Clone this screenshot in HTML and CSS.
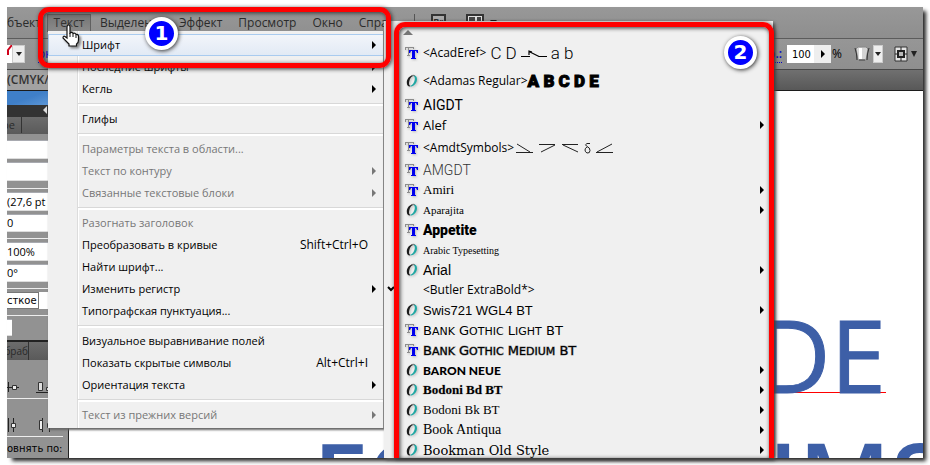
FILE: index.html
```html
<!DOCTYPE html>
<html lang="ru">
<head>
<meta charset="utf-8">
<title>Меню «Текст»</title>
<link rel="stylesheet" href="styles.css">
</head>
<body>
<svg class="defs" width="0" height="0" aria-hidden="true">
  <symbol id="tt" viewBox="0 0 14 14">
    <path d="M0 1.500h9M.5 1v3M8.500 1v2M3.500 1v8M2 9.500h3" fill="none" stroke="#8c8c8c"/>
    <path d="M4 4h9v3h-1l-1-2h-1v7h1v1H6v-1h1V5H6L5 7H4z" fill="#00e"/>
  </symbol>
  <symbol id="ot" viewBox="0 0 14 14">
    <path d="M8.500 1.200C4.500 1.200 1.800 5 1.800 8.500c0 2.600 1.200 4 3 4l.4-.8c-1.200-.3-1.500-2-1-4.200C4.800 4.600 6.300 2.200 8.500 2z" fill="#1c1c1c"/>
    <path d="M8.300 1.200c2.400 0 3.700 1.400 3.700 4 0 3.700-3 7.300-6.800 7.300l.2-.8C7.700 11.200 9.300 8.500 9.700 6c.4-2.200 0-3.700-1.400-4z" fill="#1fa8a4"/>
    <path d="M6 1.700Q8.500.8 10 1.800" fill="none" stroke="#777" stroke-width=".9"/>
  </symbol>
</svg>
<div class="app">
  <nav class="menubar">
    <button class="top first">бъект</button>
    <button class="top open">Текст</button>
    <button class="top sel">Выделение</button>
    <button class="top">Эффект</button>
    <button class="top">Просмотр</button>
    <button class="top">Окно</button>
    <button class="top help">Справка</button>
    <span class="bar-rule"></span>
    <button class="bridge">Br</button>
    <svg class="arrange" width="32" height="17" viewBox="0 0 32 17" aria-hidden="true">
      <rect x="1" y="1" width="16" height="15" fill="#ddd" stroke="#333" stroke-width="2"/>
      <path d="M3 3h6v10H3zM11 3h4v10h-4z" fill="#444"/><path d="M24 6h7l-3.500 4z" fill="#111"/>
    </svg>
  </nav>

  <div class="controlbar">
    <svg width="5" height="18" viewBox="0 0 5 18" aria-hidden="true"><path d="M0 0h5v18H0z" fill="#fff"/><path d="M5 0L1 5v5" stroke="#d0021b" stroke-width="2" fill="none"/></svg>
    <button class="drop" aria-label="Цвет заливки"><i class="down"></i></button>
    <a class="blue stroke-link" href="#">ок</a>
    <a class="blue push" href="#">р.:</a>
    <input class="opacity" aria-label="Непрозрачность" value="100"><button class="step" aria-label="Изменить непрозрачность"><i class="right"></i></button><span class="pct">%</span>
    <svg class="warp" width="16" height="16" viewBox="0 0 16 16" aria-hidden="true">
      <path d="M4 1h8l2 2-2 11H4L2 3z" fill="#d4d4d4" stroke="#888"/><path d="M5 2h3v11H5z" fill="#fff"/><path d="M1 2q2 6 2 12M15 2q-2 6-2 12" stroke="#333" fill="none"/><path d="M5 14h6" stroke="#444"/>
    </svg>
    <button class="drop small" aria-label="Огибающая"><i class="down"></i></button>
    <svg class="iso" width="14" height="16" viewBox="0 0 14 16" aria-hidden="true">
      <path d="M1 1h12v14H1z" fill="#e4e4e4" stroke="#333"/><path d="M4 5h6v6H4z" fill="#bbb" stroke="#222" stroke-width="2"/><path d="M7 1v3M7 12v3M1 8h3M10 8h3" stroke="#222"/>
    </svg>
    <i class="down wide"></i>
  </div>

  <div class="doctabs"><span class="doctab">(CMYK/П</span></div>

  <div class="work">
    <aside class="panel">
      <div class="photo"></div>
      <div class="collapse"><i class="left"></i></div>
      <div class="tabs t1"><span>ре</span></div>
      <div class="group g1">
        <input aria-label="Гарнитура">
        <input aria-label="Начертание">
      </div>
      <div class="group">
        <input aria-label="Интерлиньяж" value="(27,6 pt">
        <input aria-label="Трекинг" value="0">
      </div>
      <div class="group">
        <input aria-label="Масштаб" value="100%">
        <input aria-label="Поворот" value="0°">
      </div>
      <div class="group g2"><button class="aa">сткое</button></div>
      <div class="group g3"><input class="tiny" aria-label="Сглаживание"></div>
      <div class="tabs t2"><span>браб</span></div>
      <div class="align a1">
        <svg width="54" height="14" viewBox="0 0 54 14" aria-hidden="true"><path d="M0 7.500h12M1.500 2v10M29 12.500h16" stroke="#222"/><path d="M5.500 5.500h4v4h-4z" fill="#eee" stroke="#333"/><path d="M31.500 2.500h4v8h-4zM39.500 7.500h4v3h-4z" fill="#ddd" stroke="#333"/></svg>
      </div>
      <div class="align a2">
        <svg width="54" height="14" viewBox="0 0 54 14" aria-hidden="true"><path d="M1.500 0v14M6.500 0v14M35.500 0v14M42.500 0v14" stroke="#222"/><path d="M4.500 5.500h4v4h-4zM32.500 2.500h3v9h-3zM40.500 5.500h4v4h-4z" fill="#eee" stroke="#333"/></svg>
      </div>
      <div class="align-to">овнять по:</div>
    </aside>
    <main class="canvas">
      <p class="art"><span class="linked">DE</span></p>
      <p class="art second"><span>FO</span><span>IMS</span></p>
    </main>
  </div>

  <ul class="menu">
    <li><button class="hot">Шрифт<i class="right"></i></button></li>
    <li><button>Последние шрифты<i class="right"></i></button></li>
    <li><button>Кегль<i class="right"></i></button></li>
    <li class="sep"></li>
    <li><button>Глифы</button></li>
    <li class="sep"></li>
    <li><button disabled>Параметры текста в области...</button></li>
    <li><button disabled>Текст по контуру<i class="right"></i></button></li>
    <li><button disabled>Связанные текстовые блоки<i class="right"></i></button></li>
    <li class="sep"></li>
    <li><button disabled>Разогнать заголовок</button></li>
    <li><button>Преобразовать в кривые<kbd>Shift+Ctrl+O</kbd></button></li>
    <li><button>Найти шрифт...</button></li>
    <li><button>Изменить регистр<i class="right"></i></button></li>
    <li><button>Типографская пунктуация...</button></li>
    <li class="sep"></li>
    <li><button>Визуальное выравнивание полей</button></li>
    <li><button>Показать скрытые символы<kbd>Alt+Ctrl+I</kbd></button></li>
    <li><button>Ориентация текста<i class="right"></i></button></li>
    <li class="sep"></li>
    <li><button disabled>Текст из прежних версий<i class="right"></i></button></li>
  </ul>

  <ul class="fonts">
    <li class="scroll"><i class="up"></i></li>
    <li class="tall"><button><svg class="ic"><use href="#tt"/></svg>&lt;AcadEref&gt;<span class="sample thin">C D</span><svg width="26" height="10" viewBox="0 0 26 10" aria-hidden="true"><path d="M0 8.500h9M17 8.500h9M8 3.500l10 5M8 7V3l3 1" stroke="#000" fill="none" stroke-width="1.200"/></svg><span class="sample thin">a b</span></button></li>
    <li class="tallest"><button><svg class="ic"><use href="#ot"/></svg>&lt;Adamas Regular&gt;<span class="sample adamas">A B C D E</span></button></li>
    <li><button class="f-aigdt"><svg class="ic"><use href="#tt"/></svg>AIGDT</button></li>
    <li><button class="f-alef"><svg class="ic"><use href="#tt"/></svg>Alef<i class="right"></i></button></li>
    <li class="mid"><button><svg class="ic"><use href="#tt"/></svg>&lt;AmdtSymbols&gt;<svg class="marks" width="98" height="12" viewBox="0 0 98 12" aria-hidden="true"><path d="M1 2l13 8M0 10.500h17M23 2.500h16M39 3L25 10M46 2.500h16M47 3l15 7M80 10.500h17M81 10l15-8" stroke="#222" fill="none"/><path d="M74 1.500h-3q-3 1 0 3q3 1 3 4t-3 2.500q-2-1-2-3t2-3" stroke="#222" fill="none"/></svg></button></li>
    <li><button class="f-amgdt"><svg class="ic"><use href="#tt"/></svg>AMGDT</button></li>
    <li><button class="f-amiri"><svg class="ic"><use href="#tt"/></svg>Amiri<i class="right"></i></button></li>
    <li><button class="f-apar"><svg class="ic"><use href="#ot"/></svg>Aparajita<i class="right"></i></button></li>
    <li><button class="f-app"><svg class="ic"><use href="#tt"/></svg>Appetite</button></li>
    <li><button class="f-arab"><svg class="ic"><use href="#ot"/></svg>Arabic Typesetting</button></li>
    <li><button class="f-arial"><svg class="ic"><use href="#ot"/></svg>Arial<i class="right"></i></button></li>
    <li><button class="checked"><svg class="tick" width="8" height="8" viewBox="0 0 8 8" aria-hidden="true"><path d="M1 2l3 3 3-3" stroke="#000" stroke-width="2" fill="none"/></svg>&lt;Butler ExtraBold*&gt;</button></li>
    <li><button class="f-swis"><svg class="ic"><use href="#ot"/></svg>Swis721 WGL4 BT<i class="right"></i></button></li>
    <li><button class="f-bank"><svg class="ic"><use href="#tt"/></svg><span>B<small>ANK</small> G<small>OTHIC</small> L<small>IGHT</small> BT</span></button></li>
    <li><button class="f-bank medium"><svg class="ic"><use href="#tt"/></svg><span>B<small>ANK</small> G<small>OTHIC</small> M<small>EDIUM</small> BT</span></button></li>
    <li><button class="f-baron"><svg class="ic"><use href="#ot"/></svg>BARON NEUE<i class="right"></i></button></li>
    <li><button class="f-bodbd"><svg class="ic"><use href="#ot"/></svg>Bodoni Bd BT<i class="right"></i></button></li>
    <li><button class="f-bodbk"><svg class="ic"><use href="#ot"/></svg>Bodoni Bk BT<i class="right"></i></button></li>
    <li><button class="f-antiqua"><svg class="ic"><use href="#ot"/></svg>Book Antiqua<i class="right"></i></button></li>
    <li><button class="f-bookman"><svg class="ic"><use href="#ot"/></svg>Bookman Old Style<i class="right"></i></button></li>
  </ul>

  <div class="callout c1"></div>
  <div class="callout c2"></div>
  <span class="badge b1">1</span>
  <span class="badge b2">2</span>
  <svg class="cursor" width="18" height="24" viewBox="0 0 18 24" aria-hidden="true">
    <path d="M5 14V3q0-2 1.500-2T8 3v6q2-1.500 3 .5 2-1 3 1 2-.5 2.500 1.500V16q0 3-2 4v2H7v-2q-3-3-6-6 0-2.500 2-1.500z" fill="#fff" stroke="#111" stroke-width="1.200"/>
    <path d="M8 9v4M11 10v3M14 11v3" stroke="#111" fill="none"/>
  </svg>
</div>
</body>
</html>
```

FILE: styles.css
```css
* { box-sizing: border-box; }
html { background: #fff; }
body {
  margin: 0;
  padding: 7px;
  height: 100vh;
  overflow: hidden;
  font: 12px/16px "Open Sans", "Noto Sans", sans-serif;
  color: #000;
}
.defs { position: absolute; }
button, input { font: inherit; color: inherit; border: 0; border-radius: 0; padding: 0; margin: 0; background: none; }
ul { list-style: none; margin: 0; padding: 0; }
svg, i { flex: none; }

.app {
  position: relative;
  height: 100%;
  display: flex;
  flex-direction: column;
  background: #fff;
}
/* soft drop shadow on the right and bottom of the window */
.app::before {
  content: "";
  position: absolute;
  inset: 3px 0 0 4px;
  z-index: -1;
  box-shadow: 2px 2px 4px 1px #222;
}

/* arrows */
i { display: inline-block; width: 0; height: 0; border: 0 solid transparent; }
i.right { border-width: 4px 0 4px 4px; border-left-color: currentColor; }
i.left { border-width: 4px 4px 4px 0; border-right-color: #ddd; }
i.down { border-width: 4px 3px 0; border-top-color: #222; }
i.wide { border-width: 6px 3px 0; }
i.up { border-width: 0 5px 5px; border-bottom-color: #777; }

.menubar {
  flex: none;
  height: 32px;
  display: flex;
  align-items: flex-start;
  padding-top: 7px;
  background: linear-gradient(#989898, #8e8e8e);
  border-bottom: 1px solid #5c5c5c;
  color: #2b2b2b;
}
.top { height: 18px; padding: 0 8px; white-space: nowrap; }
.top.first { width: 40px; padding: 0; text-align: left; }
.top.open { width: 44px; padding: 0; background: linear-gradient(#757575, #8a8a8a); border: 1px solid #606060; color: #333; }
.top.sel { width: 80px; padding-left: 9px; text-align: left; overflow: hidden; }
.top.help { width: 35px; padding-right: 0; overflow: hidden; text-align: left; }
.bar-rule { width: 1px; height: 18px; background: #555; margin-left: 28px; }
.bridge { width: 15px; height: 16px; margin: 0 20px 0 16px; background: #aaa; border: 2px solid #333; font-size: 9px; line-height: 12px; font-weight: bold; }

.controlbar {
  flex: none;
  height: 31px;
  display: flex;
  align-items: center;
  padding-right: 6px;
  background: linear-gradient(#969696, #8f8f8f);
  border-bottom: 1px solid #484848;
}
.drop { width: 13px; height: 18px; display: flex; align-items: center; justify-content: center; background: #eee; border: 1px solid #ccc; }
.drop.small { width: 10px; margin-right: 11px; }
.blue { color: #00c; text-decoration: none; border-bottom: 1px dotted #00c; }
.stroke-link { margin-left: 13px; }
.push { margin-left: auto; margin-right: 5px; font-weight: 600; }
.opacity { width: 27px; height: 18px; background: #fff; padding-left: 5px; font: 11px "DejaVu Sans Condensed", "DejaVu Sans", sans-serif; }
.step { width: 17px; height: 18px; background: #eee; display: flex; align-items: center; justify-content: center; }
.pct { width: 23px; padding-left: 1px; }
.warp { margin-right: 3px; }
.iso { margin-right: 3px; }

.doctabs { flex: none; height: 21px; background: linear-gradient(#707070, #585858); border-bottom: 1px solid #1c1c1c; }
.doctab { display: block; width: 240px; height: 20px; line-height: 20px; overflow: hidden; background: #a2a2a2; color: #333; font-weight: 600; }

.work { flex: 1; min-height: 0; display: flex; overflow: hidden; }
.panel { flex: none; width: 62px; overflow: hidden; background: #929292; border-right: 1px solid #222; font-size: 11px; }
.photo { height: 14px; background: linear-gradient(160deg, #3f7fc8 40%, #6ba2dd); }
.collapse { height: 12px; padding: 1px 0 0 36px; background: #333; line-height: 8px; }
.tabs { background: linear-gradient(#6c6c6c, #5a5a5a); color: #2a2a2a; line-height: 16px; }
.tabs span { display: flex; justify-content: flex-end; border-right: 1px solid #333; overflow: hidden; }
.t1 { height: 17px; }
.t1 span { width: 15px; padding-right: 6px; }
.t2 { height: 20px; border-top: 2px solid #222; font-size: 10px; }
.t2 span { width: 22px; line-height: 18px; }
.group { display: flex; flex-direction: column; gap: 3px; padding: 3px 0 6px; height: 50px; border-top: 1px solid #eee; }
.group input { width: 62px; height: 19px; background: #fff; border-top: 1px solid #a8aab0; border-bottom: 1px solid #ddd; }
.g1 { height: 54px; padding-top: 6px; border-top: 0; }
.g2 { height: 27px; }
.aa { width: 32px; height: 17px; background: #fff; border: 1px solid #777; border-left: 0; text-align: left; font: 10px "DejaVu Sans", sans-serif; box-shadow: 9px 0 #fff; }
.g3 { height: 25px; }
.group .tiny { width: 5px; }
.align { padding: 19px 0 0; border-bottom: 1px solid #eee; }
.align svg { display: block; }
.a1 { height: 39px; padding-top: 20px; }
.a2 { height: 38px; width: 56px; }
.align-to { font: 10px/24px "DejaVu Sans", sans-serif; white-space: nowrap; height: 26px; }

.canvas { flex: 1; min-width: 0; background: #fff; overflow: hidden; padding-top: 202px; }
.art { margin: 0; padding-right: 37px; text-align: right; font-size: 100px; line-height: 122px; color: #3d5fa7; -webkit-text-stroke: 1px #3d5fa7; }
.linked { display: inline-block; height: 100px; border-bottom: 1px solid #f00; }
.second { display: flex; justify-content: space-between; padding: 0; text-align: left; font-weight: 600; -webkit-text-stroke: 0; }
.second span:first-child { margin-left: 244px; }
.second span:last-child { flex: none; width: 155px; }

/* menu of the open title */
.menu {
  position: absolute;
  left: 41px;
  top: 24px;
  width: 336px;
  padding: 3px 0 2px;
  background: linear-gradient(to right, #f0f0f0 29px, #dcdcdc 29px, #dcdcdc 30px, #fff 30px, #fff 31px, #f0f0f0 31px);
  border-right: 1px solid #888;
  box-shadow: 1px 2px 2px #666;
  font-size: 11px;
}
.menu button { width: 100%; height: 22px; display: flex; align-items: center; padding: 0 7px 0 34px; white-space: nowrap; }
.menu button i { margin-left: auto; }
.menu button:disabled { color: #777; }
.menu .hot { background: linear-gradient(#f2f5fa, #e2eaf5); border: 1px solid #a9cbef; border-width: 1px 0 1px 1px; padding-left: 33px; }
kbd { font: inherit; font-size: 12px; margin-left: auto; margin-right: 8px; }
.sep { height: 8px; padding: 3px 0 0 30px; }
.sep::before { content: ""; display: block; height: 2px; background: #fff; border-top: 1px solid #d8d8d8; }

/* list of typefaces */
.fonts {
  position: absolute;
  left: 377px;
  top: 14px;
  bottom: 0;
  width: 389px;
  overflow: hidden;
  background: #f0f0f0;
  box-shadow: 2px 2px 3px #555;
}
.fonts button { position: relative; width: 100%; height: 100%; display: flex; align-items: center; padding: 0 9px 0 21px; white-space: nowrap; }
.fonts button > i { margin-left: auto; }
.fonts li { height: 20px; }
.fonts .scroll { height: 18px; padding: 2px 0 0 19px; }
.fonts .tall { height: 27px; }
.fonts .tallest { height: 29px; }
.fonts .mid { height: 25px; }
.ic { width: 14px; height: 14px; margin-right: 4px; filter: drop-shadow(1px 1px 1px #bbb); }
.fonts .checked { padding-left: 39px; }
.tick { position: absolute; left: 3px; top: 5px; }
.marks { margin-left: 2px; }
.thin { font: 300 17px "Roboto", sans-serif; margin: 0 4px; }
.adamas { font: 900 17px "Roboto", sans-serif; -webkit-text-stroke: 1px #000; }
.fonts .f-aigdt { font: 14px "Roboto", sans-serif; }
.fonts .f-alef { font: 13px "Open Sans", sans-serif; }
.fonts .f-amgdt { font: 300 14px "Roboto", sans-serif; color: #333; }
.fonts .f-amiri { font: 13px "Liberation Serif", serif; }
.fonts .f-apar { font: 11px "Liberation Serif", serif; }
.fonts .f-app { font: 900 14px "Roboto", sans-serif; }
.fonts .f-arab { font: 10px "Liberation Serif", serif; }
.fonts .f-arial { font: 14px "Liberation Sans", sans-serif; }
.fonts .f-swis { font: 13px "Liberation Sans", sans-serif; }
.fonts .f-bank { font: 13px "DejaVu Sans", sans-serif; }
.f-bank small { font-size: 11px; }
.fonts .medium { -webkit-text-stroke: 1px #0006; }
.fonts .f-baron { font: 900 12px "Lato", sans-serif; }
.fonts .f-bodbd { font: 700 13px "Liberation Serif", serif; -webkit-text-stroke: 1px #0003; }
.fonts .f-bodbk { font: 13px "Liberation Serif", serif; }
.fonts .f-antiqua { font: 14px "Liberation Serif", serif; }
.fonts .f-bookman { font: 13px "DejaVu Serif", serif; }

/* annotations over the window */
.callout { position: absolute; border: 5px solid #f00; border-radius: 11px; box-shadow: 1px 1px 4px #333, inset 1px 1px 4px #333; }
.c1 { left: 31px; top: 0; width: 353px; height: 61px; }
.c2 { left: 387px; top: 15px; width: 380px; bottom: 0; border-bottom: 0; border-radius: 11px 11px 0 0; }
.badge {
  position: absolute;
  width: 33px;
  height: 33px;
  border: 4px solid #fff;
  border-radius: 50%;
  background: #00f;
  color: #fff;
  font: bold 20px/25px "DejaVu Sans", sans-serif;
  text-align: center;
  box-shadow: 1px 1px 4px #333;
}
.b1 { left: 138px; top: 10px; }
.b2 { left: 717px; top: 29px; }
.cursor { position: absolute; left: 55px; top: 17px; filter: drop-shadow(2px 2px 1px #888); }
```
